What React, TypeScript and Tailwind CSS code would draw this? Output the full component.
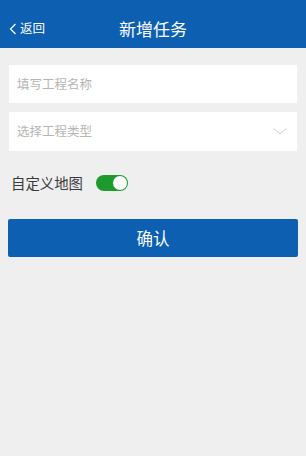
import React from "react";

export default function App() {
  const font = { fontFamily: '"Noto Sans CJK SC", "Noto Sans", sans-serif' };
  return (
    <div className="w-[306px] h-[456px] bg-[#efefef] flex flex-col" style={font}>
      <div className="h-[48px] bg-[#0d5fb2] relative flex items-center justify-center pt-[9px]">
        <div className="absolute left-[9px] top-0 h-full pt-[9px] flex items-center text-white">
          <svg width="8" height="12" viewBox="0 0 8 12" className="mr-[3px]">
            <path d="M6.5 1 L1.5 6 L6.5 11" stroke="white" strokeWidth="1.2" fill="none" />
          </svg>
          <span className="text-[12.5px] leading-none">返回</span>
        </div>
        <span className="text-white text-[17px] leading-none">新增任务</span>
      </div>
      <div className="px-[9px] pt-[17px] flex flex-col gap-[9px]">
        <div className="h-[38px] bg-white flex items-center pl-[8px]">
          <span className="text-[12.5px] text-[#b5b5b5]">填写工程名称</span>
        </div>
        <div className="h-[39px] bg-white flex items-center justify-between pl-[8px] pr-[10px]">
          <span className="text-[12.5px] text-[#b5b5b5]">选择工程类型</span>
          <svg width="14" height="7" viewBox="0 0 14 7">
            <path d="M0.5 0.8 L7 5.8 L13.5 0.8" stroke="#cfcfcf" strokeWidth="1" fill="none" />
          </svg>
        </div>
      </div>
      <div className="flex items-center pl-[11px] mt-[23px] h-[18px]">
        <span className="text-[14.4px] text-[#3a3a3a] leading-none">自定义地图</span>
        <div className="ml-[13px] w-[32px] h-[16px] rounded-full bg-[#1c9b2c] relative">
          <div className="absolute right-[1px] top-[1px] w-[14px] h-[14px] rounded-full bg-white" />
        </div>
      </div>
      <div className="px-[8px] mt-[27px]">
        <div className="h-[38px] bg-[#0d5fb2] rounded-[2px] flex items-center justify-center">
          <span className="text-white text-[16.5px] leading-none">确认</span>
        </div>
      </div>
    </div>
  );
}
